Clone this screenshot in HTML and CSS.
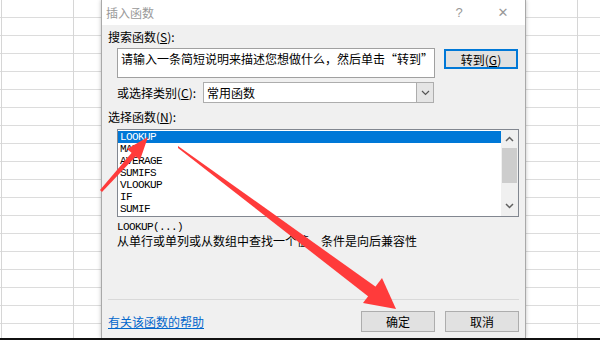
FILE: index.html
```html
<!DOCTYPE html>
<html lang="zh-CN">
<head>
    <meta charset="UTF-8">
    <title>插入函数</title>
    <link rel="stylesheet" href="styles.css">
</head>
<body>
    <div class="sheet">
        <div class="dialog">
            <div class="titlebar">
                <span class="title">插入函数</span>
                <span class="help-btn">?</span>
                <span class="close-btn">✕</span>
            </div>
            <div class="content">
                <div class="label">搜索函数(<u>S</u>):</div>
                <div class="search-row">
                    <div class="search-box">请输入一条简短说明来描述您想做什么，然后单击“转到”</div>
                    <button class="btn btn-default">转到(<u>G</u>)</button>
                </div>
                <div class="category-row">
                    <span class="cat-label">或选择类别(<u>C</u>):</span>
                    <div class="select">
                        <span class="select-text">常用函数</span>
                        <span class="select-arrow">
                            <svg width="9" height="6" viewBox="0 0 9 6"><path d="M1 1l3.5 3.5L8 1" fill="none" stroke="#555" stroke-width="1.2"/></svg>
                        </span>
                    </div>
                </div>
                <div class="label label-list">选择函数(<u>N</u>):</div>
                <div class="listbox">
                    <ul class="items">
                        <li class="selected">LOOKUP</li>
                        <li>MAX</li>
                        <li>AVERAGE</li>
                        <li>SUMIFS</li>
                        <li>VLOOKUP</li>
                        <li>IF</li>
                        <li>SUMIF</li>
                    </ul>
                    <div class="scrollbar">
                        <svg class="sb-arrow" width="9" height="6" viewBox="0 0 9 6"><path d="M1 5l3.5-3.5L8 5" fill="none" stroke="#606060" stroke-width="1.5"/></svg>
                        <div class="thumb"></div>
                        <svg class="sb-arrow sb-down" width="9" height="6" viewBox="0 0 9 6"><path d="M1 1l3.5 3.5L8 1" fill="none" stroke="#606060" stroke-width="1.5"/></svg>
                    </div>
                </div>
                <div class="signature">LOOKUP(...)</div>
                <div class="desc">从单行或单列或从数组中查找一个值。条件是向后兼容性</div>
                <div class="separator"></div>
                <div class="footer">
                    <a class="help-link" href="#">有关该函数的帮助</a>
                    <div class="buttons">
                        <button class="btn">确定</button>
                        <button class="btn">取消</button>
                    </div>
                </div>
            </div>
        </div>

        <svg class="arrows" width="600" height="340" viewBox="0 0 600 340">
            <!-- short arrow to LOOKUP -->
            <polygon points="100,190 102,192 138,154 134,150" fill="#ff3b3b"/>
            <polygon points="148,137 127,149 140,160" fill="#ff3b3b"/>
            <!-- long arrow to OK button -->
            <polygon points="178,146 178,148 369,297 376,287" fill="#ff3b3b"/>
            <polygon points="396,309 363,303 382,278" fill="#ff3b3b"/>
        </svg>
    </div>
</body>
</html>
```

FILE: styles.css
```css
body {
    margin: 0;
    font-family: "Noto Sans CJK SC", "Noto Sans", sans-serif;
    font-size: 12px;
    color: #000;
}

.sheet {
    position: relative;
    width: 600px;
    height: 338px;
    overflow: hidden;
    display: flex;
    background:
        linear-gradient(#d6d6d6, #d6d6d6) 1px 0 / 1px 100% no-repeat,
        linear-gradient(#d6d6d6, #d6d6d6) 73px 0 / 1px 100% no-repeat,
        linear-gradient(#d6d6d6, #d6d6d6) 577px 0 / 1px 100% no-repeat,
        repeating-linear-gradient(to bottom, #fff 0 17px, #dcdcdc 17px 18px);
    border-bottom: 2px solid #111;
}

.dialog {
    margin-left: 101px;
    width: 423px;
    height: 338px;
    background: #f0f0f0;
    border-left: 1px solid #a9a9a9;
    border-right: 1px solid #a9a9a9;
    box-shadow: 0 0 4px rgba(0, 0, 0, 0.25);
}

.titlebar {
    height: 25px;
    background: #fff;
    display: flex;
    align-items: center;
    padding-left: 4px;
    color: #999;
}

.title {
    flex: 1;
    font-size: 12px;
}

.help-btn {
    width: 44px;
    text-align: center;
    font-family: "Liberation Sans", sans-serif;
    font-size: 13px;
    color: #999;
}

.close-btn {
    width: 44px;
    text-align: center;
    font-family: "DejaVu Sans", sans-serif;
    font-size: 13px;
    color: #999;
}

.content {
    padding: 0 6px;
}

.label {
    margin-top: 6px;
    line-height: 12px;
    height: 12px;
}

u {
    text-decoration: underline;
    text-underline-offset: 1px;
}

.search-row {
    display: flex;
    align-items: flex-start;
    margin-top: 5px;
    padding-left: 9px;
}

.search-box {
    border: 1px solid #a0a0a0;
    background: #fff;
    padding: 3px 0 0 3px;
    box-sizing: border-box;
    width: 318px;
    height: 30px;
    line-height: 14px;
    white-space: nowrap;
    overflow: hidden;
}

.btn {
    font-family: "Noto Sans CJK SC", "Noto Sans", sans-serif;
    font-size: 12px;
    color: #000;
    background: #e1e1e1;
    border: 1px solid #adadad;
    width: 74px;
    height: 21px;
    padding: 0;
    line-height: 18px;
}

.btn-default {
    margin-left: 9px;
    margin-top: 1px;
    height: 20px;
    border: 2px solid #0078d7;
    line-height: 15px;
}

.category-row {
    display: flex;
    align-items: center;
    margin-top: 4px;
    padding-left: 9px;
}

.cat-label {
    width: 86px;
}

.select {
    width: 231px;
    height: 21px;
    box-sizing: border-box;
    border: 1px solid #adadad;
    background: #fff;
    display: flex;
}

.select-text {
    flex: 1;
    padding-left: 3px;
    line-height: 19px;
}

.select-arrow {
    width: 16px;
    background: #e5e5e5;
    border-left: 1px solid #adadad;
    display: flex;
    align-items: center;
    justify-content: center;
}

.label-list {
    margin-top: 8px;
}

.listbox {
    margin: 6px 0 0 9px;
    width: 402px;
    height: 88px;
    box-sizing: border-box;
    border: 1px solid #828790;
    background: #fff;
    display: flex;
}

.items {
    list-style: none;
    margin: 0;
    padding: 1px 0 0;
    flex: 1;
    font-family: "Liberation Mono", monospace;
    font-size: 11px;
    letter-spacing: -0.6px;
}

.items li {
    height: 12px;
    line-height: 12px;
    padding-left: 2px;
}

.items .selected {
    background: #0078d7;
    color: #fff;
}

.scrollbar {
    width: 17px;
    background: #f0f0f0;
    display: flex;
    flex-direction: column;
    align-items: center;
}

.sb-arrow {
    margin-top: 6px;
}

.thumb {
    width: 15px;
    height: 35px;
    background: #cdcdcd;
    margin-top: 6px;
}

.sb-down {
    margin-top: 20px;
}

.signature {
    margin-top: 4px;
    padding-left: 9px;
    height: 12px;
    line-height: 12px;
    font-family: "Liberation Mono", monospace;
    font-size: 11px;
    letter-spacing: -0.6px;
}

.desc {
    margin-top: 2px;
    padding-left: 9px;
    height: 12px;
    line-height: 12px;
}

.separator {
    margin-top: 52px;
    height: 1px;
    background: #d9d9d9;
}

.footer {
    display: flex;
    align-items: center;
    justify-content: space-between;
    margin-top: 11px;
}

.help-link {
    color: #0066cc;
    text-decoration: underline;
}

.buttons {
    display: flex;
    gap: 10px;
}

.arrows {
    position: absolute;
    left: 0;
    top: 0;
}
```
